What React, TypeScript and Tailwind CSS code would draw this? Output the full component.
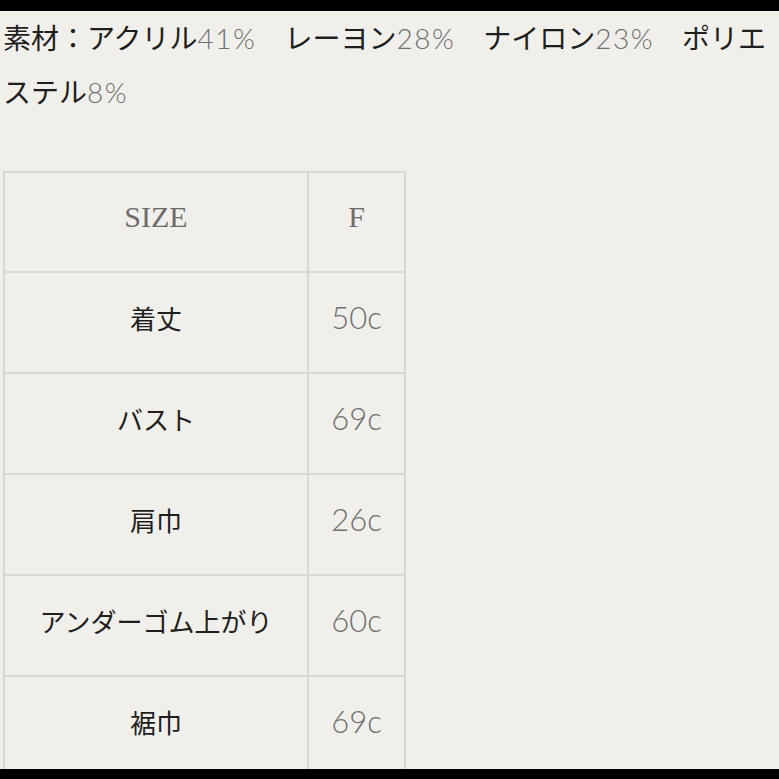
const jp = "font-['Noto_Sans_CJK_JP','Noto_Sans',sans-serif]";
const num = "font-['Lato','Noto_Sans',sans-serif] font-light text-[#707070]";

const rows = [
  { label: "着丈", value: "50c" },
  { label: "バスト", value: "69c" },
  { label: "肩巾", value: "26c" },
  { label: "アンダーゴム上がり", value: "60c" },
  { label: "裾巾", value: "69c" },
];

function Pct({ v }: { v: string }) {
  return <span className={`${num} text-[28px] tracking-[1.5px]`}>{v}</span>;
}

export default function App() {
  return (
    <div className="w-[779px] h-[779px] bg-black flex flex-col">
      <div className="h-[11px] shrink-0" />
      <div className="flex-1 overflow-hidden bg-[#f1efea]">
        <p className={`${jp} text-[28px] leading-[53px] text-[#1e1e1e] pl-[3px] whitespace-nowrap`}>
          素材：アクリル<Pct v="41%" />　レーヨン<Pct v="28%" />　ナイロン<Pct v="23%" />　ポリエ
          <br />
          ステル<Pct v="8%" />
        </p>

        <table className="mt-[52px] ml-[3px] border-collapse">
          <tbody>
            <tr className="h-[100px]">
              <td className="w-[304px] border-2 border-[#dad8d3] text-center align-middle pb-[12px] font-['Liberation_Serif',serif] text-[30px] text-[#6c6c6c]">
                SIZE
              </td>
              <td className="w-[97px] border-2 border-[#dad8d3] text-center align-middle pb-[12px] font-['Liberation_Serif',serif] text-[30px] text-[#6c6c6c]">
                F
              </td>
            </tr>
            {rows.map((r) => (
              <tr key={r.label} className="h-[101px]">
                <td className={`border-2 border-[#dad8d3] text-center align-middle pb-[10px] ${jp} text-[26px] text-[#1e1e1e]`}>
                  {r.label}
                </td>
                <td className={`border-2 border-[#dad8d3] text-center align-middle pb-[10px] ${num} text-[31px]`}>
                  {r.value}
                </td>
              </tr>
            ))}
          </tbody>
        </table>
      </div>
      <div className="h-[10px] shrink-0" />
    </div>
  );
}
